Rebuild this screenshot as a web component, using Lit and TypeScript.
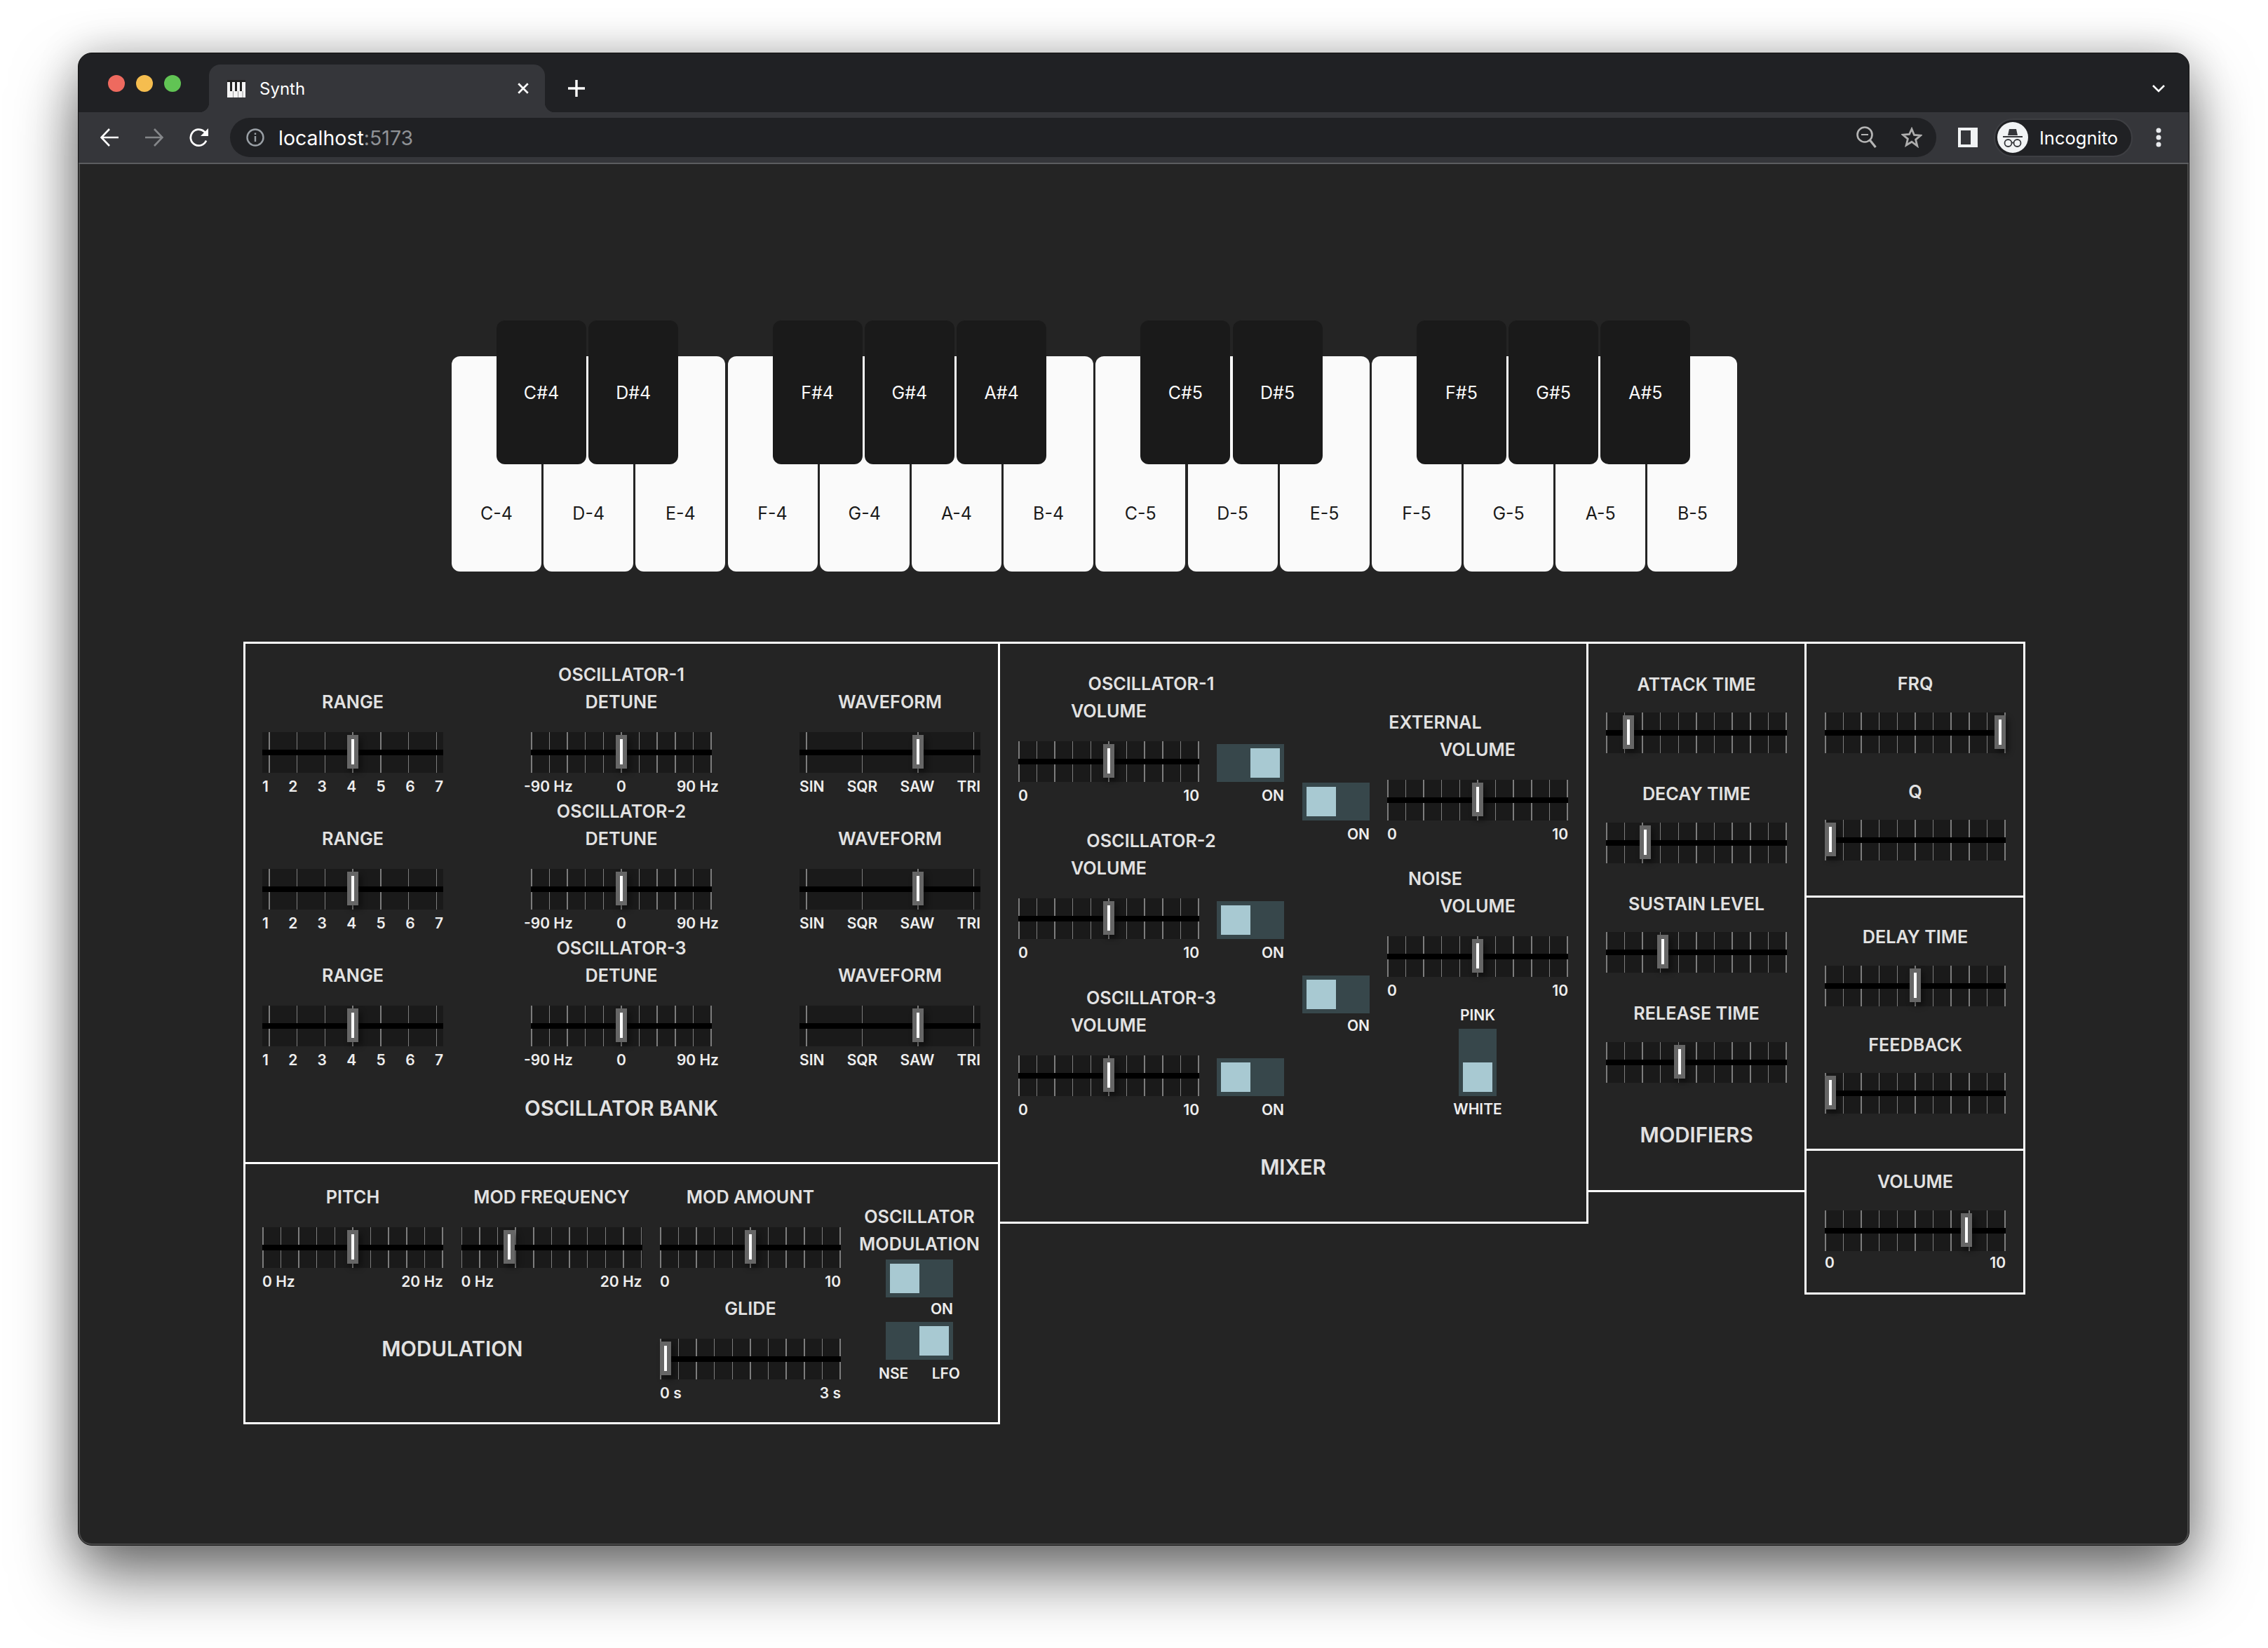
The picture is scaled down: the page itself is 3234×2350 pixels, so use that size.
import { LitElement, css, html, nothing } from 'lit'
import { customElement, property } from 'lit/decorators.js'

const NOTES = ['C', 'D', 'E', 'F', 'G', 'A', 'B']
const SHARPS = ['C', 'D', 'F', 'G', 'A']
const KEY_PITCH = 131.2

const TEN = 11
const RANGE_MARKS = ['1', '2', '3', '4', '5', '6', '7']
const WAVE_MARKS = ['SIN', 'SQR', 'SAW', 'TRI']

@customElement('synth-slider')
export class SynthSlider extends LitElement {
  static styles = css`
    :host {
      display: block;
      width: 258px;
    }
    .track {
      position: relative;
      height: 58px;
      background: #1a1a1a;
    }
    .ticks {
      display: flex;
      justify-content: space-between;
      height: 100%;
      box-sizing: border-box;
    }
    .tick {
      width: 1.5px;
      background: #7c7c7c;
    }
    .bar {
      position: absolute;
      left: 0;
      right: 0;
      top: 25px;
      height: 8px;
      background: #000;
    }
    .thumb {
      position: absolute;
      top: 4px;
      width: 16px;
      height: 48px;
      display: flex;
      align-items: center;
      justify-content: center;
      background: #666;
      box-shadow: 4px 5px 9px rgba(0, 0, 0, 0.45);
    }
    .thumb i {
      display: block;
      width: 4px;
      height: 36px;
      background: #fff;
    }
    .marks {
      display: flex;
      justify-content: space-between;
      margin-top: 6px;
      font-size: 21px;
      font-weight: 600;
      line-height: 28px;
      color: #eee;
    }
    .marks.tight {
      margin-top: 3px;
    }
    .marks.wide {
      display: grid;
      grid-template-columns: 1fr auto 1fr;
      margin-left: -10px;
      margin-right: -10px;
    }
    .marks.wide span:last-child {
      text-align: right;
    }
  `

  @property({ type: Number }) value = 0.5
  @property({ type: Number }) ticks = TEN
  @property({ type: Number }) inset = 0
  @property({ type: Array }) marks: string[] = []
  @property() variant = ''

  render() {
    return html`
      <div class="track">
        <div class="ticks" style="padding: 0 ${this.inset}px">
          ${Array.from({ length: this.ticks }, () => html`<div class="tick"></div>`)}
        </div>
        <div class="bar"></div>
        <div class="thumb" style="left: ${this.value * 242}px"><i></i></div>
      </div>
      ${this.marks.length
        ? html`<div class="marks ${this.variant}">${this.marks.map((m) => html`<span>${m}</span>`)}</div>`
        : nothing}
    `
  }
}

@customElement('synth-switch')
export class SynthSwitch extends LitElement {
  static styles = css`
    :host {
      display: block;
    }
    .sw {
      display: flex;
      align-items: center;
      width: 96px;
      height: 54px;
      padding: 0 6px;
      box-sizing: border-box;
      background: #37474b;
    }
    .sw.on {
      justify-content: flex-end;
    }
    .sw.vert {
      width: 54px;
      height: 96px;
      padding: 6px 0;
      justify-content: center;
      align-items: flex-start;
    }
    .sw.vert.on {
      align-items: flex-end;
    }
    .knob {
      width: 42px;
      height: 42px;
      background: #a8c9d2;
    }
  `

  @property({ type: Boolean }) on = false
  @property({ type: Boolean }) vert = false

  render() {
    return html`<div class="sw ${this.on ? 'on' : ''} ${this.vert ? 'vert' : ''}"><div class="knob"></div></div>`
  }
}

@customElement('app-root')
export class AppRoot extends LitElement {
  static styles = css`
    :host {
      display: block;
      width: 3234px;
      height: 2350px;
      padding: 75px 112px 148px 111px;
      box-sizing: border-box;
      background: #fff;
      font-family: Inter, 'Liberation Sans', sans-serif;
    }
    .window {
      display: flex;
      flex-direction: column;
      height: 100%;
      border: 1px solid #111;
      border-radius: 20px;
      background: #202124;
      box-shadow: 0 44px 90px rgba(0, 0, 0, 0.55), 0 0 60px rgba(0, 0, 0, 0.2);
    }

    /* browser chrome */
    .tabstrip {
      display: flex;
      height: 84px;
      flex: none;
      border-radius: 20px 20px 0 0;
      padding-left: 42px;
      padding-right: 34px;
    }
    .lights {
      display: flex;
      gap: 16px;
      padding-top: 31px;
    }
    .lights i {
      width: 24px;
      height: 24px;
      border-radius: 50%;
    }
    .tab {
      position: relative;
      display: flex;
      align-items: center;
      width: 479px;
      height: 68px;
      margin: 16px 0 0 40px;
      padding: 0 22px 0 26px;
      box-sizing: border-box;
      border-radius: 16px 16px 0 0;
      background: #35363a;
      color: #fff;
      font-size: 24px;
    }
    .tab::before,
    .tab::after {
      content: '';
      position: absolute;
      bottom: 0;
      width: 14px;
      height: 14px;
    }
    .tab::before {
      left: -14px;
      background: radial-gradient(circle at 0 0, transparent 14px, #35363a 14.5px);
    }
    .tab::after {
      right: -14px;
      background: radial-gradient(circle at 100% 0, transparent 14px, #35363a 14.5px);
    }
    .tab .name {
      flex: 1;
      margin-left: 20px;
    }
    .plus {
      margin: 38px 0 0 33px;
    }
    .spacer {
      flex: 1;
    }
    .chev {
      margin-top: 45px;
    }
    .toolbar {
      display: flex;
      align-items: center;
      flex: none;
      height: 72px;
      padding: 0 39px 0 12px;
      background: #35363a;
      border-bottom: 2px solid #5c5d60;
    }
    .ib {
      display: flex;
      align-items: center;
      justify-content: center;
      flex: none;
      width: 64px;
      height: 56px;
    }
    .omni {
      display: flex;
      align-items: center;
      flex: 1;
      height: 56px;
      margin-left: 12px;
      padding: 0 20px 0 23px;
      border-radius: 28px;
      background: #202124;
      font-size: 28.5px;
      color: #fff;
    }
    .omni .host {
      margin-left: 20px;
      flex: 1;
    }
    .omni .host span {
      color: #8f9296;
    }
    .omni svg + svg {
      margin-left: 34px;
    }
    .side {
      margin-left: 31px;
      flex: none;
    }
    .pill {
      display: flex;
      align-items: center;
      flex: none;
      width: 198px;
      height: 55px;
      margin-left: 23px;
      padding-left: 3px;
      box-sizing: border-box;
      border: 2px solid #3e3f43;
      border-radius: 28px;
      background: #202124;
      color: #fff;
      font-size: 25.5px;
    }
    .pill span {
      margin-left: 16px;
    }
    .dots {
      margin-left: 33px;
      flex: none;
    }

    /* page */
    .page {
      flex: 1;
      display: flex;
      flex-direction: column;
      background: #242424;
      border-radius: 0 0 19px 19px;
      box-shadow: inset 2px 0 0 #4a4a4a, inset -2px 0 0 #4a4a4a, inset 0 -2px 0 #4a4a4a;
    }
    .keyboard {
      position: relative;
      display: flex;
      gap: 3.2px;
      height: 358px;
      margin: 223px 0 0 532px;
      align-items: flex-end;
    }
    .white,
    .black {
      display: flex;
      justify-content: center;
      box-sizing: border-box;
      width: 128px;
      border-radius: 12px;
      font-size: 25px;
      line-height: 30px;
    }
    .white {
      height: 307px;
      padding-top: 209px;
      background: #fafafa;
      color: #1a1a1a;
    }
    .black {
      position: absolute;
      top: 0;
      height: 205px;
      align-items: center;
      background: #1a1a1a;
      color: #fafafa;
    }

    .board {
      display: flex;
      align-items: flex-start;
      margin: 100px 0 0 235px;
      color: #e2e2e2;
    }
    .panel {
      border: 3px solid #fff;
      box-sizing: border-box;
    }
    .lbl {
      font-size: 25.2px;
      font-weight: 600;
      line-height: 39px;
      text-align: center;
      white-space: nowrap;
    }
    .lbl.gap {
      margin-bottom: 23px;
    }
    .lbl.near {
      margin-bottom: 20.5px;
    }
    .title {
      font-size: 29.5px;
      font-weight: 600;
      line-height: 40px;
      text-align: center;
      white-space: nowrap;
    }
    .small {
      font-size: 21px;
      font-weight: 600;
      line-height: 28px;
      color: #eee;
    }

    /* oscillator bank + modulation */
    .left {
      flex: none;
      width: 1079px;
    }
    .bank {
      padding: 25px 25px 57px 24px;
    }
    .bank-row {
      display: flex;
      align-items: flex-end;
      justify-content: space-between;
      margin-bottom: 2px;
    }
    .bank .title {
      margin-top: 34px;
    }
    .modulation {
      display: grid;
      grid-template-columns: 258px 258px 258px 173px;
      column-gap: 25.5px;
      margin-top: -3px;
      padding: 28px 0 27px 24px;
    }
    .modulation .title {
      grid-column: span 2;
      align-self: center;
      margin-top: 3px;
    }
    .modulation .glide {
      margin-top: 5px;
    }
    .oscmod {
      grid-column: 4;
      grid-row: 1 / span 2;
      display: flex;
      flex-direction: column;
      align-items: center;
      padding-top: 28px;
    }
    .oscmod .on {
      width: 96px;
      margin-top: 3px;
      text-align: right;
    }
    .oscmod .sw2 {
      margin-top: 4px;
    }
    .oscmod .ends {
      display: flex;
      justify-content: space-between;
      width: 116px;
      margin-top: 6px;
    }
    .oscmod .first {
      margin-top: 2px;
    }

    /* mixer */
    .mixer {
      flex: none;
      width: 842px;
      margin-left: -3px;
      padding: 38px 26px 58px;
    }
    .mixer-cols {
      display: flex;
      gap: 26px;
    }
    .mix-col {
      display: flex;
      flex-direction: column;
      width: 379px;
      gap: 31px;
    }
    .mix-col.second {
      margin-top: 55px;
      gap: 30px;
    }
    .mix-row {
      display: flex;
      align-items: flex-end;
      gap: 25px;
    }
    .mix-row.top {
      align-items: flex-start;
    }
    .sw-block .small {
      margin-top: 6px;
      text-align: right;
    }
    .sw-block.low {
      margin-top: 118px;
    }
    .sw-block.low .small {
      margin-top: 4px;
    }
    .pinkwhite {
      display: flex;
      flex-direction: column;
      align-items: center;
      gap: 5px;
      margin-top: 7px;
    }
    .mixer .title {
      margin-top: 47px;
    }

    /* modifiers */
    .modifiers {
      flex: none;
      width: 314px;
      margin-left: -3px;
      padding: 38.5px 25px 59px;
    }
    .modifiers .ctl + .ctl {
      margin-top: 39px;
    }
    .modifiers .title {
      margin-top: 54px;
    }

    /* filter, delay, volume */
    .right {
      flex: none;
      width: 315px;
      margin-left: -3px;
    }
    .right .panel + .panel {
      margin-top: -3px;
    }
    .right .panel {
      padding: 0 25px 50px 26px;
    }
    .right .panel .ctl + .ctl {
      margin-top: 36px;
    }
    .frq {
      padding-top: 38px !important;
    }
    .delay {
      padding-top: 37px !important;
    }
    .vol {
      padding-top: 25px !important;
      padding-bottom: 28px !important;
    }
  `

  slider(
    lines: string[],
    value: number,
    opts: { ticks?: number; inset?: number; marks?: string[]; variant?: string; near?: boolean } = {},
  ) {
    const last = lines.length - 1
    return html`
      <div class="ctl">
        ${lines.map((l, i) => html`<div class="lbl ${i === last ? (opts.near ? 'near' : 'gap') : ''}">${l}</div>`)}
        <synth-slider
          .value=${value}
          .ticks=${opts.ticks ?? TEN}
          .inset=${opts.inset ?? 0}
          .marks=${opts.marks ?? []}
          .variant=${opts.variant ?? ''}
        ></synth-slider>
      </div>
    `
  }

  oscRow(n: number) {
    return html`
      <div class="bank-row">
        ${this.slider(['RANGE'], 0.5, { ticks: 7, inset: 9, marks: RANGE_MARKS })}
        ${this.slider([`OSCILLATOR-${n}`, 'DETUNE'], 0.5, { marks: ['-90 Hz', '0', '90 Hz'], variant: 'wide' })}
        ${this.slider(['WAVEFORM'], 0.665, { ticks: 4, inset: 9, marks: WAVE_MARKS })}
      </div>
    `
  }

  mixGroup(name: string, on: boolean) {
    return html`
      <div>
        <div class="lbl">${name}</div>
        <div class="mix-row">
          ${this.slider(['VOLUME'], 0.5, { marks: ['0', '10'] })}
          <div class="sw-block">
            <synth-switch .on=${on}></synth-switch>
            <div class="small">ON</div>
          </div>
        </div>
      </div>
    `
  }

  renderKeys() {
    const whites: unknown[] = []
    const blacks: unknown[] = []
    let idx = 0
    for (const oct of [4, 5]) {
      for (const n of NOTES) {
        whites.push(html`<div class="white">${n}-${oct}</div>`)
        if (SHARPS.includes(n)) {
          blacks.push(html`<div class="black" style="left: ${64 + idx * KEY_PITCH}px">${n}#${oct}</div>`)
        }
        idx++
      }
    }
    return html`<div class="keyboard">${whites}${blacks}</div>`
  }

  renderChrome() {
    return html`
      <div class="tabstrip">
        <div class="lights">
          <i style="background:#ee6a5f"></i><i style="background:#f5bd4f"></i><i style="background:#61c454"></i>
        </div>
        <div class="tab">
          <svg width="26" height="25" viewBox="0 0 26 25">
            <rect width="26" height="25" fill="#f4f4f4" />
            <rect width="26" height="3" fill="#222" />
            <path d="M4 3h3v13H4zM11 3h3v13h-3zM18 3h3v13h-3z" fill="#222" />
            <path d="M8.5 16v9M15.5 16v9M22 16v9" stroke="#999" stroke-width="1" />
          </svg>
          <span class="name">Synth</span>
          <svg width="18" height="18" viewBox="0 0 16 16" fill="none" stroke="#fff" stroke-width="2.4">
            <path d="M2 2l12 12M14 2L2 14" />
          </svg>
        </div>
        <svg class="plus" width="24" height="24" viewBox="0 0 24 24" fill="none" stroke="#fff" stroke-width="3.4">
          <path d="M12 0v24M0 12h24" />
        </svg>
        <div class="spacer"></div>
        <svg class="chev" width="18" height="11" viewBox="0 0 18 11" fill="none" stroke="#fff" stroke-width="2.6">
          <path d="M1 1l8 8 8-8" />
        </svg>
      </div>
      <div class="toolbar">
        <div class="ib">
          <svg width="26" height="26" viewBox="0 0 26 26" fill="none" stroke="#fff" stroke-width="2.6">
            <path d="M26 13H2M13 1L1.5 13 13 25" />
          </svg>
        </div>
        <div class="ib">
          <svg width="26" height="26" viewBox="0 0 26 26" fill="none" stroke="#85878a" stroke-width="2.6">
            <path d="M0 13h24M13 1l11.500 12L13 25" />
          </svg>
        </div>
        <div class="ib">
          <svg width="28" height="28" viewBox="0 0 28 28" fill="none" stroke="#fff" stroke-width="2.800">
            <path d="M24 18.500A11.500 11.500 0 1 1 21 5.500L25 9" />
            <path d="M27 1v11H16z" fill="#fff" stroke="none" />
          </svg>
        </div>
        <div class="omni">
          <svg width="26" height="26" viewBox="0 0 26 26" fill="none" stroke="#9aa0a6" stroke-width="2.4">
            <circle cx="13" cy="13" r="11.500" />
            <path d="M13 11v8M13 6.500v2.500" />
          </svg>
          <div class="host">localhost<span>:5173</span></div>
          <svg width="30" height="32" viewBox="0 0 30 32" fill="none" stroke="#b5b5b5" stroke-width="2.600">
            <circle cx="12" cy="12" r="10.500" />
            <path d="M7 12h10" stroke-width="2" />
            <path d="M19.500 20l8 10" stroke-width="3.200" />
          </svg>
          <svg width="30" height="30" viewBox="0 0 30 30" fill="none" stroke="#aeaeae" stroke-width="2.800">
            <path d="M15 3l3.500 8.500 9 .7-6.900 5.900 2.200 8.900L15 21.200 7.200 26l2.200-8.900-6.900-5.900 9-.7z" />
          </svg>
        </div>
        <svg class="side" width="28" height="28" viewBox="0 0 28 28">
          <rect width="28" height="28" fill="#f1f3f4" />
          <rect x="4" y="4" width="14" height="20" fill="#35363a" />
        </svg>
        <div class="pill">
          <svg width="44" height="44" viewBox="0 0 44 44">
            <circle cx="22" cy="22" r="22" fill="#f1f3f4" />
            <path d="M15 19l2-9h10l2 9z" fill="#35363a" />
            <rect x="8" y="20" width="28" height="2" fill="#35363a" />
            <g fill="none" stroke="#35363a" stroke-width="1.800">
              <circle cx="15.500" cy="30" r="5" />
              <circle cx="28.500" cy="30" r="5" />
              <path d="M20.500 29.500h3" />
            </g>
          </svg>
          <span>Incognito</span>
        </div>
        <svg class="dots" width="8" height="28" viewBox="0 0 8 28" fill="#e8eaed">
          <circle cx="4" cy="4" r="3.500" />
          <circle cx="4" cy="14" r="3.500" />
          <circle cx="4" cy="24" r="3.500" />
        </svg>
      </div>
    `
  }

  renderBoard() {
    return html`
      <div class="board">
        <div class="left">
          <div class="panel bank">
            ${this.oscRow(1)}${this.oscRow(2)}${this.oscRow(3)}
            <div class="title">OSCILLATOR BANK</div>
          </div>
          <div class="panel modulation">
            ${this.slider(['PITCH'], 0.5, { marks: ['0 Hz', '20 Hz'] })}
            ${this.slider(['MOD FREQUENCY'], 0.25, { marks: ['0 Hz', '20 Hz'] })}
            ${this.slider(['MOD AMOUNT'], 0.5, { marks: ['0', '10'] })}
            <div class="oscmod">
              <div class="lbl">OSCILLATOR</div>
              <div class="lbl">MODULATION</div>
              <synth-switch class="first"></synth-switch>
              <div class="small on">ON</div>
              <synth-switch class="sw2" .on=${true}></synth-switch>
              <div class="small ends"><span>NSE</span><span>LFO</span></div>
            </div>
            <div class="title">MODULATION</div>
            <div class="glide">${this.slider(['GLIDE'], 0, { marks: ['0 s', '3 s'] })}</div>
          </div>
        </div>

        <div class="panel mixer">
          <div class="mixer-cols">
            <div class="mix-col">
              ${this.mixGroup('OSCILLATOR-1', true)}${this.mixGroup('OSCILLATOR-2', false)}${this.mixGroup(
                'OSCILLATOR-3',
                false,
              )}
            </div>
            <div class="mix-col second">
              <div>
                <div class="lbl">EXTERNAL</div>
                <div class="mix-row">
                  <div class="sw-block">
                    <synth-switch></synth-switch>
                    <div class="small">ON</div>
                  </div>
                  ${this.slider(['VOLUME'], 0.5, { marks: ['0', '10'] })}
                </div>
              </div>
              <div>
                <div class="lbl">NOISE</div>
                <div class="mix-row top">
                  <div class="sw-block low">
                    <synth-switch></synth-switch>
                    <div class="small">ON</div>
                  </div>
                  <div>
                    ${this.slider(['VOLUME'], 0.5, { marks: ['0', '10'] })}
                    <div class="pinkwhite">
                      <div class="small">PINK</div>
                      <synth-switch .vert=${true} .on=${true}></synth-switch>
                      <div class="small">WHITE</div>
                    </div>
                  </div>
                </div>
              </div>
            </div>
          </div>
          <div class="title">MIXER</div>
        </div>

        <div class="panel modifiers">
          ${this.slider(['ATTACK TIME'], 0.1, { near: true })}
          ${this.slider(['DECAY TIME'], 0.2, { near: true })}
          ${this.slider(['SUSTAIN LEVEL'], 0.3, { near: true })}
          ${this.slider(['RELEASE TIME'], 0.4, { near: true })}
          <div class="title">MODIFIERS</div>
        </div>

        <div class="right">
          <div class="panel frq">
            ${this.slider(['FRQ'], 1, { near: true })} ${this.slider(['Q'], 0, { near: true })}
          </div>
          <div class="panel delay">
            ${this.slider(['DELAY TIME'], 0.5, { near: true })} ${this.slider(['FEEDBACK'], 0, { near: true })}
          </div>
          <div class="panel vol">
            ${this.slider(['VOLUME'], 0.8, { near: true, marks: ['0', '10'], variant: 'tight' })}
          </div>
        </div>
      </div>
    `
  }

  render() {
    return html`
      <div class="window">
        ${this.renderChrome()}
        <div class="page">${this.renderKeys()} ${this.renderBoard()}</div>
      </div>
    `
  }
}
